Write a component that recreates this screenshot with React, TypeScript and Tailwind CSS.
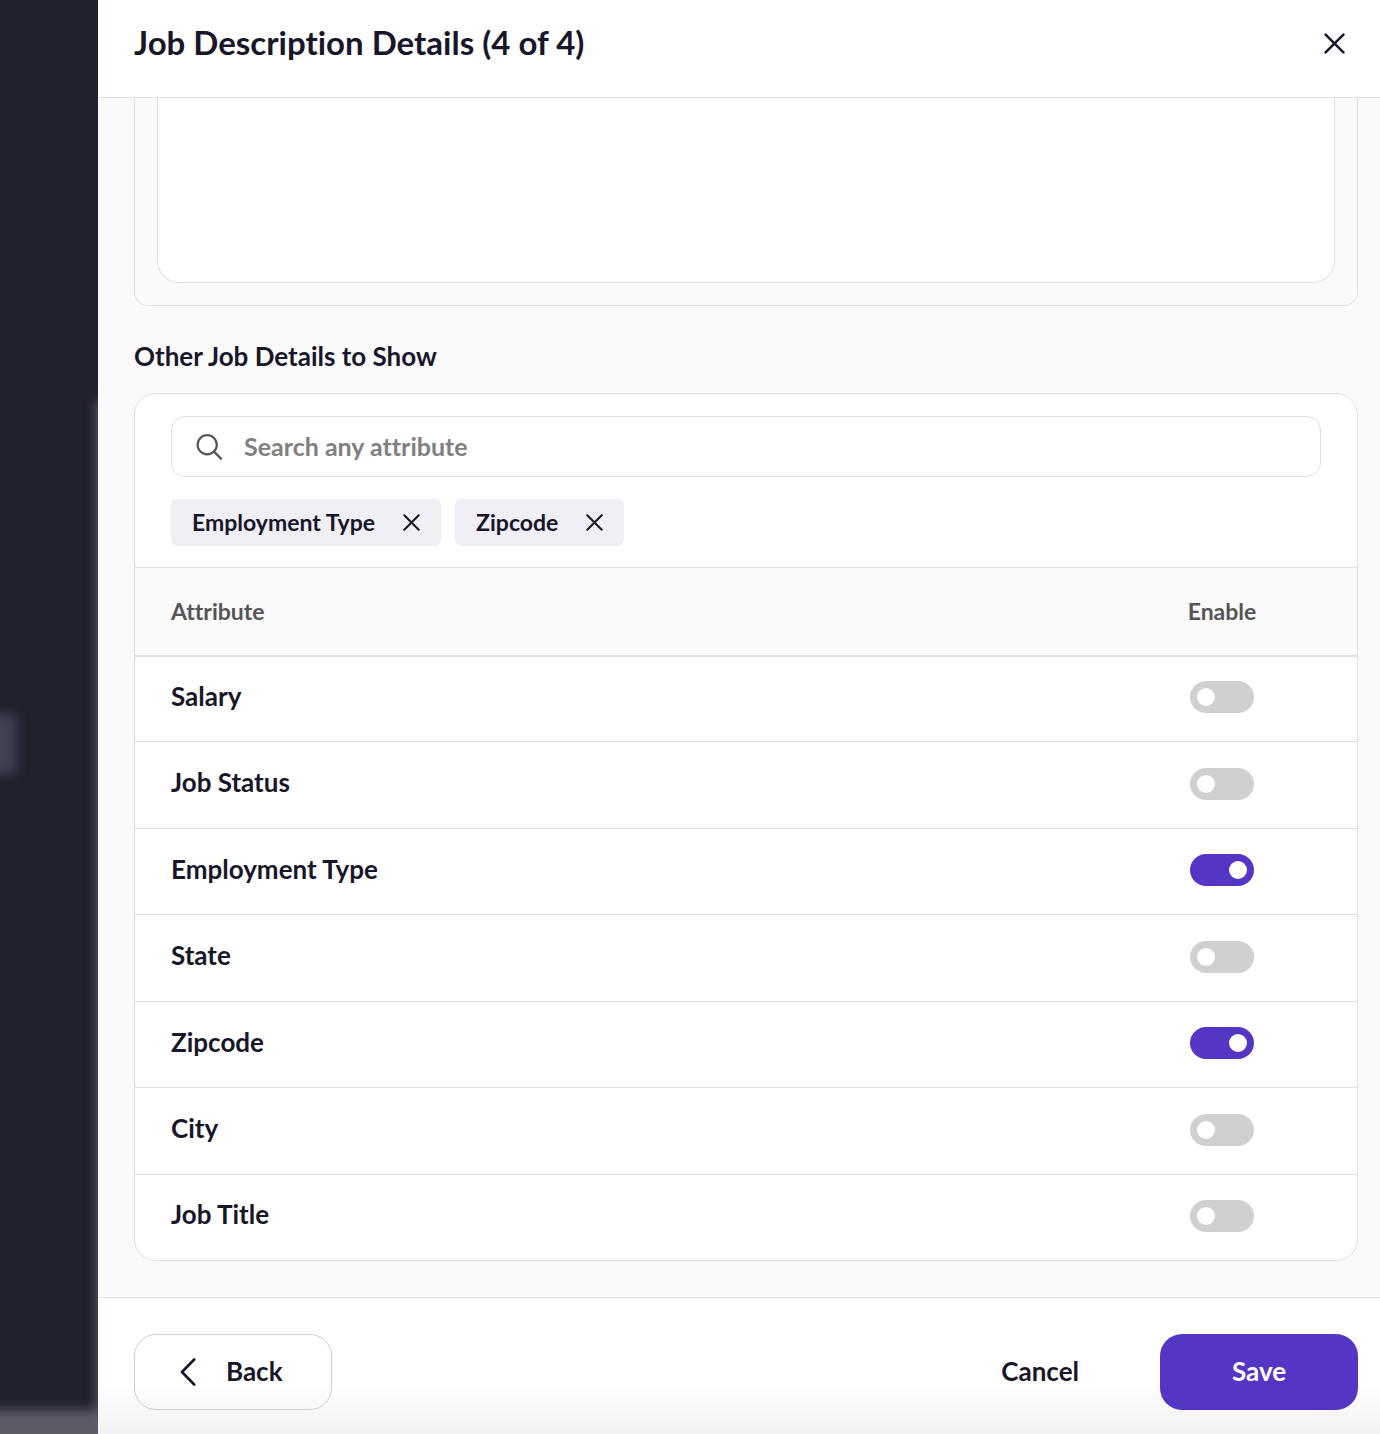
import { useState } from "react";

interface Attribute {
  id: string;
  name: string;
}

const attributes: Attribute[] = [
  { id: "salary", name: "Salary" },
  { id: "job-status", name: "Job Status" },
  { id: "employment-type", name: "Employment Type" },
  { id: "state", name: "State" },
  { id: "zipcode", name: "Zipcode" },
  { id: "city", name: "City" },
  { id: "job-title", name: "Job Title" },
];

function CloseIcon({ className }: { className: string }) {
  return (
    <svg viewBox="0 0 20 20" fill="none" stroke="currentColor" strokeLinecap="round" className={className} aria-hidden="true">
      <path d="M1.5 1.5l17 17M18.5 1.5l-17 17" />
    </svg>
  );
}

function SearchIcon() {
  return (
    <svg viewBox="0 0 26 26" fill="none" stroke="currentColor" strokeWidth="2.2" strokeLinecap="round" className="size-[26px] shrink-0 text-[#555]" aria-hidden="true">
      <circle cx="11.2" cy="10.8" r="9.6" />
      <path d="M18 17.6l7 7" />
    </svg>
  );
}

// Dimmed, blurred page that stays visible beside the drawer
function Backdrop() {
  return (
    <div className="relative w-[98px] shrink-0 overflow-hidden bg-[#1f212d]" aria-hidden="true">
      <div className="absolute top-[400px] -right-2 bottom-0 w-3 bg-[#4c4655] blur-[4px]" />
      <div className="absolute top-[714px] -left-4 h-[60px] w-8 bg-[#3f4353] blur-[6px]" />
      <div className="absolute -right-5 -bottom-5 -left-5 h-11 bg-[#5b5b66] blur-[6px]" />
    </div>
  );
}

export default function App() {
  const [enabled, setEnabled] = useState<string[]>(["employment-type", "zipcode"]);
  const [query, setQuery] = useState("");

  const toggle = (id: string) =>
    setEnabled((prev) => (prev.includes(id) ? prev.filter((item) => item !== id) : [...prev, id]));

  const chips = attributes.filter((a) => enabled.includes(a.id));
  const rows = attributes.filter((a) => a.name.toLowerCase().includes(query.toLowerCase()));

  return (
    <div className="flex min-h-screen font-['Lato','Open_Sans',sans-serif] font-bold text-[#18172a] [font-variant-ligatures:none]">
      <Backdrop />

      <div role="dialog" aria-labelledby="drawer-title" className="flex min-w-0 flex-1 flex-col bg-[#fafafa]">
        {/* Header */}
        <header className="flex h-[98px] items-start justify-between border-b border-[#e0e0e0] bg-white pt-[22px] pr-[35px] pl-9">
          <h1 id="drawer-title" className="text-[33px] leading-10">
            Job Description Details (4 of 4)
          </h1>
          <button type="button" aria-label="Close" className="flex h-[42px] items-center">
            <CloseIcon className="size-[21px] stroke-[2.4]" />
          </button>
        </header>

        <main className="flex-1 pr-[22px] pb-9 pl-9">
          {/* Description editor, scrolled under the header */}
          <div className="rounded-b-[14px] border border-t-0 border-[#e0e0e0] px-[22px] pb-[22px]">
            <textarea
              aria-label="Job description"
              className="block h-[185px] w-full resize-none rounded-b-[22px] border border-t-0 border-[#e0e0e0] bg-white px-6 outline-none"
            />
          </div>

          <h2 className="mt-[30px] text-[26px] leading-10">Other Job Details to Show</h2>

          <section className="mt-[17px] overflow-hidden rounded-[22px] border border-[#e0e0e0] bg-white">
            <div className="px-9 pt-[22px] pb-[21px]">
              <label className="flex h-[61px] items-center gap-[22px] rounded-[14px] border border-[#e0e0e0] px-6">
                <SearchIcon />
                <input
                  type="text"
                  aria-label="Search any attribute"
                  placeholder="Search any attribute"
                  value={query}
                  onChange={(e) => setQuery(e.target.value)}
                  className="min-w-0 flex-1 bg-transparent pb-0.5 text-[25px] leading-8 outline-none placeholder:text-[#808080]"
                />
              </label>

              <div className="mt-[22px] flex flex-wrap gap-[14px]">
                {chips.map((chip) => (
                  <span
                    key={chip.id}
                    className="flex h-[47px] items-center gap-7 rounded-md bg-[#f0eff5] px-[21px] text-[23px] leading-7"
                  >
                    <span className="pb-0.5">{chip.name}</span>
                    <button type="button" aria-label={`Remove ${chip.name}`} onClick={() => toggle(chip.id)}>
                      <CloseIcon className="size-[17px] stroke-[2.4]" />
                    </button>
                  </span>
                ))}
              </div>
            </div>

            <table className="w-full border-collapse">
              <thead>
                <tr className="h-[88px] border-t border-b-2 border-[#e0e0e0] bg-[#fafafa] text-[23px] leading-7 text-[#555]">
                  <th scope="col" className="pl-9 text-left font-bold">
                    Attribute
                  </th>
                  <th scope="col" className="w-[270px] text-center font-bold">
                    Enable
                  </th>
                </tr>
              </thead>
              <tbody>
                {rows.map((row) => (
                  <tr key={row.id} className="h-[86px] border-b border-[#e0e0e0] even:h-[87px] last:h-[85px] last:border-b-0">
                    <td className="pb-1.5 pl-9 text-[26px] leading-8">
                      <label htmlFor={row.id}>{row.name}</label>
                    </td>
                    <td className="pb-[3px] text-center">
                      <input
                        id={row.id}
                        type="checkbox"
                        role="switch"
                        checked={enabled.includes(row.id)}
                        onChange={() => toggle(row.id)}
                        className="inline-flex h-8 w-16 cursor-pointer appearance-none items-center rounded-full bg-[#d0d0d0] px-[7px] align-middle before:size-[18px] before:rounded-full before:bg-white checked:justify-end checked:bg-[#5535c4]"
                      />
                    </td>
                  </tr>
                ))}
              </tbody>
            </table>
          </section>
        </main>

        {/* Footer actions */}
        <footer className="flex items-center border-t border-[#e0e0e0] bg-linear-to-b from-white from-60% to-[#f2f2f2] pt-9 pr-[22px] pb-6 pl-9 text-[26px] leading-8">
          <button
            type="button"
            className="flex h-[76px] w-[198px] items-center gap-[30px] rounded-[22px] border border-[#d0d0d0] pl-[45px]"
          >
            <svg viewBox="0 0 16 28" fill="none" stroke="currentColor" strokeWidth="2.6" strokeLinecap="round" strokeLinejoin="round" className="h-7 w-4" aria-hidden="true">
              <path d="M14.2 1.5L2 14l12.2 12.5" />
            </svg>
            <span className="pb-0.5">Back</span>
          </button>
          <button type="button" className="ml-auto h-[76px] px-[81px] pb-0.5">
            Cancel
          </button>
          <button type="button" className="h-[76px] w-[198px] rounded-[22px] bg-[#5535c4] pb-0.5 text-white">
            Save
          </button>
        </footer>
      </div>
    </div>
  );
}
